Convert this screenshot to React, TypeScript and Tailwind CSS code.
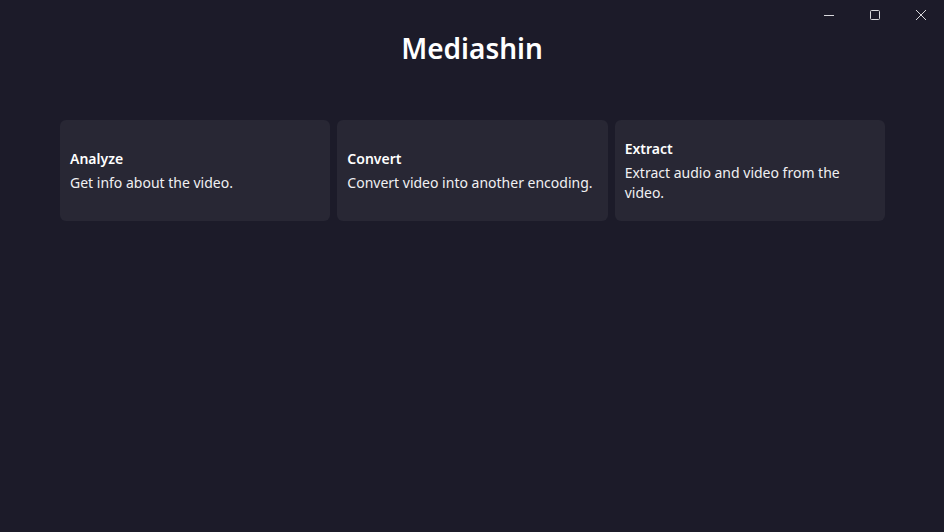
import React from "react";

const cards = [
  { title: "Analyze", desc: "Get info about the video." },
  { title: "Convert", desc: "Convert video into another encoding." },
  { title: "Extract", desc: "Extract audio and video from the video." },
];

export default function App() {
  return (
    <div
      className="w-[944px] h-[532px] bg-[#1c1b29] text-white flex flex-col overflow-hidden"
      style={{ fontFamily: '"Noto Sans", "Open Sans", sans-serif' }}
    >
      <div className="flex justify-end h-[30px] shrink-0">
        <div className="w-[46px] h-[30px] flex items-center justify-center">
          <svg width="10" height="10" viewBox="0 0 10 10">
            <path d="M0 5.5 H10" stroke="#d8d8dc" strokeWidth="1" />
          </svg>
        </div>
        <div className="w-[46px] h-[30px] flex items-center justify-center">
          <svg width="10" height="10" viewBox="0 0 10 10">
            <rect x="0.5" y="0.5" width="9" height="9" rx="1" fill="none" stroke="#d8d8dc" strokeWidth="1" />
          </svg>
        </div>
        <div className="w-[46px] h-[30px] flex items-center justify-center">
          <svg width="10" height="10" viewBox="0 0 10 10">
            <path d="M0 0 L10 10 M10 0 L0 10" stroke="#d8d8dc" strokeWidth="1" />
          </svg>
        </div>
      </div>
      <h1 className="text-center text-[28px] font-semibold leading-[36px]">Mediashin</h1>
      <div className="grid grid-cols-3 gap-[7px] pl-[60px] pr-[59px] mt-[54px]">
        {cards.map((c) => (
          <div
            key={c.title}
            className="h-[101px] rounded-[6px] bg-[#282734] px-[10px] flex flex-col justify-center"
          >
            <div className="text-[14px] font-semibold leading-[20px] mb-[4px]">{c.title}</div>
            <div className="text-[14px] leading-[20px] text-[#f0f0f2]">{c.desc}</div>
          </div>
        ))}
      </div>
    </div>
  );
}
